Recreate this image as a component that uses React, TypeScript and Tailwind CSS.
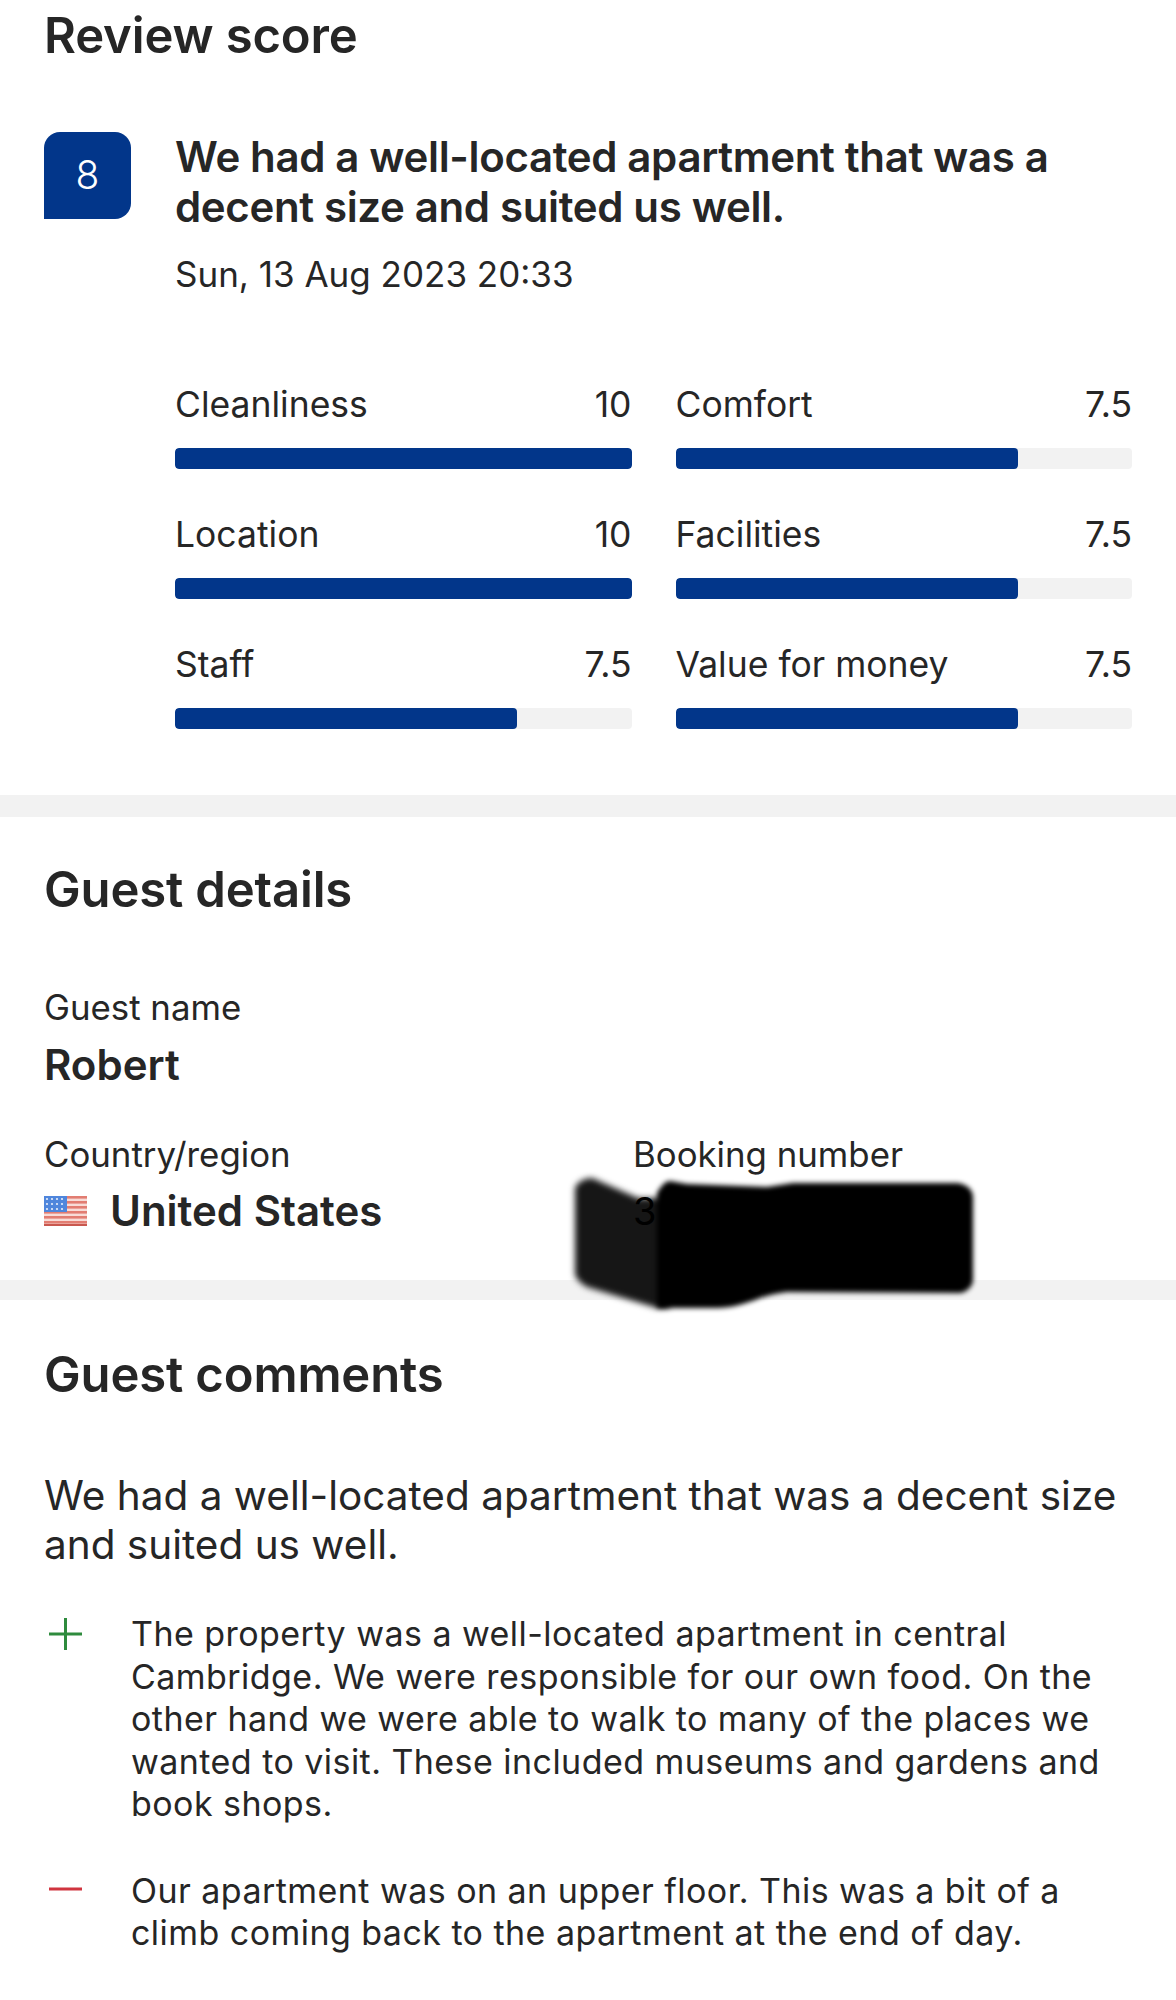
import React from "react";

const ratings = [
  { label: "Cleanliness", score: "10", fill: "w-full" },
  { label: "Comfort", score: "7.5", fill: "w-3/4" },
  { label: "Location", score: "10", fill: "w-full" },
  { label: "Facilities", score: "7.5", fill: "w-3/4" },
  { label: "Staff", score: "7.5", fill: "w-3/4" },
  { label: "Value for money", score: "7.5", fill: "w-3/4" },
];

const SectionTitle = ({ text }: { text: string }) => (
  <h2 className="text-[49px] leading-[52px] font-semibold tracking-[-0.15px]">{text}</h2>
);

const UsFlag = () => (
  <svg width="43" height="30" viewBox="0 0 43 30" className="shrink-0">
    <rect width="43" height="30" fill="#f8dcd7" />
    {[0, 5, 10, 15, 20, 25].map((y) => (
      <rect key={y} y={y} width="43" height="2.6" fill="#e27d72" />
    ))}
    <rect width="23" height="16" fill="#4f86dc" />
    {[3, 8, 13].map((y) =>
      [3, 8, 13, 18].map((x) => <circle key={`${x}-${y}`} cx={x} cy={y} r="1.1" fill="#e8eefa" />),
    )}
    <rect y="28" width="43" height="2" fill="#c9584f" />
  </svg>
);

// scribble over the booking number, grey lobe sits under the digit and the black part over it
const RedactionBack = () => (
  <svg
    width="404"
    height="136"
    viewBox="0 0 404 136"
    className="absolute left-[-60px] top-[-13px] overflow-visible blur-[3px]"
  >
    <path
      d="M2 12 C4 6 12 2 19 2 L65 22 L96 22 L96 132 L84 132 L14 111 C6 106 2 102 2 97 Z"
      fill="#161616"
    />
  </svg>
);

const RedactionFront = () => (
  <svg
    width="404"
    height="136"
    viewBox="0 0 404 136"
    className="absolute left-[-60px] top-[-13px] overflow-visible blur-[2.5px]"
  >
    <path
      d="M84 17 C88 10 92 5 97 5 L114 8 L194 11 L220 7 L384 7 C394 8 400 14 400 21 L400 104 C400 110 394 116 387 117 L214 116 C205 117 196 119 187 122 C172 128 158 132 144 132 L84 132 Z"
      fill="#000000"
    />
  </svg>
);

export default function App() {
  return (
    <div className="w-[1176px] bg-white text-[#262626] font-['Inter',sans-serif]">
      <section className="px-[44px] pt-[10px] pb-[66px]">
        <SectionTitle text="Review score" />
        <div className="mt-[70px] flex gap-[44px]">
          <div className="flex h-[87px] w-[87px] shrink-0 items-center justify-center rounded-2xl rounded-bl-none bg-[#02368a] text-[39px] font-light text-white">
            8
          </div>
          <div>
            <h3 className="text-[42px] leading-[49.5px] font-semibold tracking-[-0.35px]">
              We had a well-located apartment that was a decent size and suited us well.
            </h3>
            <p className="mt-[21px] text-[35px] leading-[44px]">Sun, 13 Aug 2023 20:33</p>
          </div>
        </div>
        <div className="mt-[86px] ml-[131px] grid grid-cols-2 gap-x-[44px] gap-y-[43px]">
          {ratings.map((r) => (
            <div key={r.label}>
              <div className="flex justify-between text-[35.5px] leading-[46px]">
                <span>{r.label}</span>
                <span>{r.score}</span>
              </div>
              <div className="mt-[20px] h-[21px] overflow-hidden rounded bg-[#f2f2f2]">
                <div className={`h-full rounded bg-[#02368a] ${r.fill}`} />
              </div>
            </div>
          ))}
        </div>
      </section>

      <div className="h-[22px] bg-[#f2f2f2]" />

      <section className="relative z-10 px-[44px] pt-[47px] pb-[47px]">
        <SectionTitle text="Guest details" />
        <p className="mt-[71px] text-[34.8px] leading-[40px]">Guest name</p>
        <p className="mt-[16px] text-[42px] leading-[44px] font-semibold">Robert</p>
        <div className="mt-[48px] flex">
          <div className="w-[589px]">
            <p className="text-[34.8px] leading-[38px]">Country/region</p>
            <div className="mt-[16px] flex items-center gap-[23px]">
              <UsFlag />
              <span className="text-[42px] leading-[44px] font-semibold">United States</span>
            </div>
          </div>
          <div>
            <p className="text-[34.8px] leading-[38px]">Booking number</p>
            <div className="relative mt-[16px]">
              <RedactionBack />
              <span className="relative text-[38px] leading-[44px] text-black">3</span>
              <RedactionFront />
            </div>
          </div>
        </div>
      </section>

      <div className="h-[20px] bg-[#f2f2f2]" />

      <section className="px-[44px] pt-[49px] pb-[45px]">
        <SectionTitle text="Guest comments" />
        <p className="mt-[71px] text-[40.5px] leading-[48.5px]">
          We had a well-located apartment that was a decent size and suited us well.
        </p>
        <div className="mt-[44px] flex flex-col gap-[44px]">
          <div className="flex">
            <svg width="87" height="40" viewBox="0 0 87 40" className="shrink-0">
              <path d="M5 21 H38 M21.5 5 V37" stroke="#2e8b3d" strokeWidth="3" fill="none" />
            </svg>
            <p className="text-[34px] leading-[42.5px] tracking-[0.45px]">
              The property was a well-located apartment in central Cambridge. We were responsible for our own food. On the other hand we were able to walk to many of the places we wanted to visit. These included museums and gardens and book shops.
            </p>
          </div>
          <div className="flex">
            <svg width="87" height="40" viewBox="0 0 87 40" className="shrink-0">
              <path d="M5 19 H38" stroke="#d0343f" strokeWidth="3" fill="none" />
            </svg>
            <p className="text-[34px] leading-[42.5px] tracking-[0.45px]">
              Our apartment was on an upper floor. This was a bit of a climb coming back to the apartment at the end of day.
            </p>
          </div>
        </div>
      </section>
    </div>
  );
}
